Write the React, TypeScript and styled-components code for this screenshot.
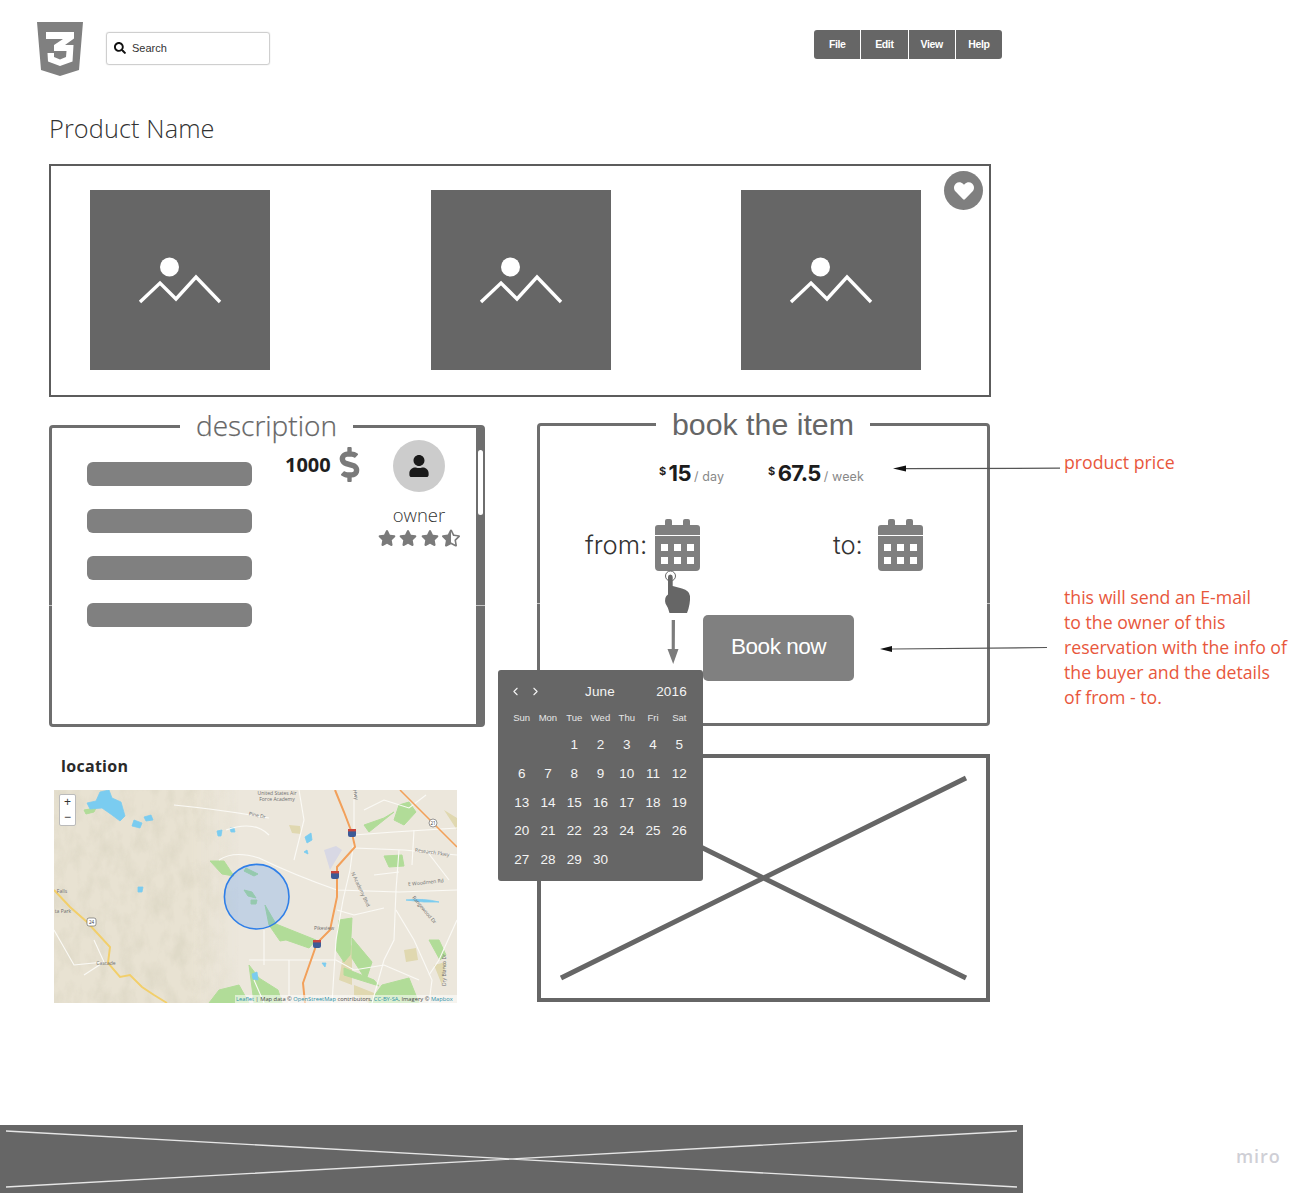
import React from "react";
import styled, { createGlobalStyle } from "styled-components";
import { FaDollarSign, FaHeart, FaSearch, FaStar, FaStarHalfAlt, FaUser } from "react-icons/fa";
import { ChevronLeft, ChevronRight } from "lucide-react";

const Global = createGlobalStyle`
  html, body { margin: 0; padding: 0; background: #fff; }
  body { font-family: "Open Sans", "Liberation Sans", sans-serif; }
  * { box-sizing: border-box; }
`;

const Board = styled.div`
  position: relative;
  width: 1309px;
  height: 1193px;
  overflow: hidden;
  background: #fff;
  display: flex;
  flex-direction: column;
`;

const Header = styled.header`
  display: flex;
  align-items: flex-start;
  height: 54px;
  margin: 22px 0 0 37px;
`;
const Logo = styled.svg`
  width: 46px;
  height: 54px;
  flex: none;
`;
const SearchBox = styled.div`
  display: flex;
  align-items: center;
  gap: 6px;
  width: 164px;
  height: 33px;
  margin: 10px 0 0 23px;
  padding: 0 0 1px 7px;
  border: 1px solid #cfcfcf;
  border-radius: 3px;
  box-shadow: 0 0 1px #bbb;
  font: 11px "Liberation Sans", sans-serif;
  color: #333;
`;
const Menu = styled.nav`
  display: flex;
  gap: 1px;
  margin: 8px 0 0 544px;
  border-radius: 3px;
  overflow: hidden;
`;
const MenuButton = styled.div`
  height: 29px;
  width: 46.25px;
  padding-bottom: 1px;
  background: #666;
  color: #fff;
  display: flex;
  align-items: center;
  justify-content: center;
  font: bold 10.5px "Liberation Sans", sans-serif;
  letter-spacing: -0.4px;
`;

const Title = styled.h1`
  margin: 35px 0 0 49px;
  font: 300 25.3px/34px "Open Sans", sans-serif;
  letter-spacing: 0.1px;
  color: #333;
`;

const Gallery = styled.section`
  position: relative;
  width: 942px;
  height: 233px;
  margin: 19px 0 0 49px;
  padding: 24px 0 0 39px;
  border: 2px solid #5c5c5c;
  display: grid;
  grid-template-columns: 341px 310px 180px;
`;
const ImageSlot = styled.div`
  width: 180px;
  height: 180px;
  background: #666;
`;
const ImageGlyph = styled.svg`
  display: block;
  width: 180px;
  height: 180px;
`;
const Favorite = styled.div`
  position: absolute;
  top: 5px;
  right: 6px;
  width: 39px;
  height: 39px;
  border-radius: 50%;
  background: #7f7f7f;
  color: #fff;
  display: flex;
  align-items: center;
  justify-content: center;
`;

const Columns = styled.div`
  display: grid;
  grid-template-columns: 436px 453px;
  column-gap: 52px;
  margin: 26px 0 0 49px;
`;
const LeftColumn = styled.div`
  padding-top: 2px;
`;
const RightColumn = styled.div``;

const Panel = styled.section`
  position: relative;
  border: 3px solid #6e6e6e;
  border-radius: 4px;
  &::before {
    content: "";
    position: absolute;
    left: -3px;
    right: -3px;
    top: 177px;
    height: 1px;
    background: linear-gradient(to right, #fff 3px, transparent 3px, transparent calc(100% - 3px), #fff 0);
    opacity: 0.6;
  }
`;
const DescriptionPanel = styled(Panel)`
  width: 436px;
  height: 302px;
  border-right-width: 9px;
  display: flex;
  align-items: flex-start;
  &::before { right: -9px; background: linear-gradient(to right, #fff 3px, transparent 3px, transparent calc(100% - 9px), #fff 0); }
`;
const Thumb = styled.div`
  position: absolute;
  top: 22px;
  right: -7px;
  width: 5px;
  height: 65px;
  background: #fff;
  border-radius: 3px;
`;
const PanelLabel = styled.h2`
  position: absolute;
  margin: 0;
  background: #fff;
  color: #666;
  white-space: nowrap;
`;
const DescriptionLabel = styled(PanelLabel)`
  top: -21px;
  left: 128px;
  padding: 0 16px;
  font: 300 28px/36px "Open Sans", sans-serif;
  -webkit-text-stroke: 0.25px #666;
`;
const BookLabel = styled(PanelLabel)`
  top: -19px;
  left: 116px;
  padding: 0 16px;
  font: 400 30.3px/36px "Liberation Sans", sans-serif;
`;
const BarList = styled.div`
  display: flex;
  flex-direction: column;
  gap: 23px;
  margin: 34px 0 0 35px;
`;
const Bar = styled.div`
  width: 165px;
  height: 24px;
  border-radius: 6px;
  background: #808080;
`;
const RentPrice = styled.div`
  display: flex;
  align-items: center;
  gap: 1px;
  width: 72px;
  height: 36px;
  margin: 18px 0 0 33px;
  font: 700 20px "Open Sans", sans-serif;
  color: #1f1f1f;
  svg { color: #7a7a7a; flex: none; }
`;
const Owner = styled.div`
  display: flex;
  flex-direction: column;
  align-items: center;
  width: 90px;
  margin: 12px 0 0 17px;
`;
const Avatar = styled.div`
  width: 52px;
  height: 52px;
  border-radius: 50%;
  background: #ccc;
  color: #1a1a1a;
  display: flex;
  align-items: center;
  justify-content: center;
`;
const OwnerName = styled.div`
  margin-top: 11px;
  font: 300 18.5px/24px "Open Sans", sans-serif;
  color: #333;
`;
const Stars = styled.div`
  display: flex;
  gap: 3.2px;
  margin-top: 2px;
  color: #7a7a7a;
`;

const LocationHeading = styled.h3`
  margin: 28px 0 0 12px;
  font: 700 16px/22px "Open Sans", sans-serif;
  letter-spacing: 0.3px;
  color: #2a2a2a;
`;
const MapFrame = styled.div`
  position: relative;
  width: 403px;
  height: 213px;
  margin: 13px 0 0 5px;
  overflow: hidden;
  background: #ece7dc;
`;
const MapArt = styled.svg`
  display: block;
  width: 403px;
  height: 213px;
`;
const ZoomControl = styled.div`
  position: absolute;
  top: 4px;
  left: 5px;
  width: 17px;
  height: 32px;
  background: #fff;
  border: 1px solid #bbb;
  border-radius: 2px;
  display: flex;
  flex-direction: column;
  align-items: center;
  font: 12px/15px "Liberation Sans", sans-serif;
  color: #333;
`;
const Attribution = styled.div`
  position: absolute;
  right: 0;
  bottom: 0;
  width: 222px;
  height: 8px;
  padding-left: 1px;
  background: rgba(255, 255, 255, 0.55);
  font: 5.75px/8px "Open Sans", sans-serif;
  white-space: nowrap;
  color: #444;
  span { color: #2a8fa8; }
`;

const BookPanel = styled(Panel)`
  width: 453px;
  height: 303px;
`;
const PriceRow = styled.div`
  display: flex;
  align-items: baseline;
  gap: 44px;
  height: 28px;
  margin: 33px 0 0 119px;
`;
const Rate = styled.div`
  display: flex;
  align-items: baseline;
  font: 700 22px/28px Inter, sans-serif;
  letter-spacing: -0.6px;
  color: #1c1c1c;
`;
const Currency = styled.span`
  font-size: 11px;
  position: relative;
  top: -6px;
  margin-right: 3px;
`;
const Period = styled.span`
  font: 400 12.5px Inter, sans-serif;
  letter-spacing: 0.1px;
  color: #888;
  margin-left: 3px;
`;
const DateRow = styled.div`
  display: grid;
  grid-template-columns: 248px auto;
  margin: 32px 0 0 45px;
`;
const DateField = styled.div`
  display: flex;
  align-items: center;
  height: 52px;
`;
const DateLabel = styled.span<{ $width: number }>`
  width: ${(p) => p.$width}px;
  font: 300 25.6px/30px Inter, sans-serif;
  color: #333;
`;
const BookButton = styled.div`
  width: 151px;
  height: 66px;
  margin: 44px 0 0 163px;
  padding-bottom: 2px;
  background: #808080;
  border-radius: 5px;
  color: #fff;
  display: flex;
  align-items: center;
  justify-content: center;
  font: 22.5px "Liberation Sans", sans-serif;
  letter-spacing: -0.5px;
`;
const Placeholder = styled.div`
  width: 453px;
  height: 248px;
  margin-top: 28px;
  border: 4px solid #666;
`;
const PlaceholderCross = styled.svg`
  display: block;
  width: 445px;
  height: 240px;
`;

const Footer = styled.footer`
  width: 1023px;
  height: 68px;
  margin-top: 122px;
  background: #666;
`;
const FooterCross = styled.svg`
  display: block;
  width: 1023px;
  height: 68px;
`;
const Miro = styled.div`
  position: absolute;
  left: 1236px;
  top: 1144px;
  font: 600 18px/24px "Open Sans", sans-serif;
  letter-spacing: 0.9px;
  color: #cfcfd6;
`;

const Note = styled.div`
  position: absolute;
  left: 1064px;
  font: 400 17.7px/25px "Open Sans", sans-serif;
  color: #e8573c;
  white-space: pre;
`;
const PriceNote = styled(Note)`
  top: 450px;
`;
const ReservationNote = styled(Note)`
  top: 585px;
`;
const Overlay = styled.svg`
  position: absolute;
  left: 0;
  top: 0;
  width: 1309px;
  height: 1193px;
  pointer-events: none;
`;

const CalendarPopup = styled.div`
  position: absolute;
  left: 498px;
  top: 670px;
  width: 205px;
  height: 211px;
  padding: 12px 10.5px 0;
  background: #666;
  border-radius: 3px;
  color: #f4f4f4;
  font-family: "Liberation Sans", sans-serif;
`;
const CalendarHeader = styled.div`
  display: grid;
  grid-template-columns: 53px 78px 1fr;
  align-items: center;
  height: 18px;
  font-size: 13.5px;
  letter-spacing: 0.2px;
`;
const CalendarNav = styled.div`
  display: flex;
  gap: 7px;
  margin-left: 0;
`;
const CalendarMonth = styled.div`
  text-align: center;
  margin-left: -1px;
`;
const CalendarYear = styled.div`
  text-align: right;
  padding-right: 5.5px;
`;
const WeekRow = styled.div`
  display: grid;
  grid-template-columns: repeat(7, 1fr);
  margin-top: 11px;
  height: 14px;
  font-size: 9.5px;
  line-height: 14px;
  text-align: center;
  color: #e6e6e6;
`;
const DayGrid = styled.div`
  display: grid;
  grid-template-columns: repeat(7, 1fr);
  grid-auto-rows: 28.7px;
  margin-top: 6.4px;
  font-size: 13.5px;
  line-height: 28.7px;
  text-align: center;
`;

const weekDays = ["Sun", "Mon", "Tue", "Wed", "Thu", "Fri", "Sat"];
const days: (number | null)[] = [null, null, ...Array.from({ length: 30 }, (_, i) => i + 1)];
const menu = ["File", "Edit", "View", "Help"];

const CalendarIcon = () => (
  <svg width="45" height="52" viewBox="0 0 45 52" fill="#7f7f7f" style={{ flex: "none" }}>
    <rect x="10" y="0" width="7" height="10" rx="2" />
    <rect x="28" y="0" width="7" height="10" rx="2" />
    <path d="M0 16V9a3 3 0 0 1 3-3h39a3 3 0 0 1 3 3v7z" />
    <path
      fillRule="evenodd"
      d="M0 17h45v31a4 4 0 0 1-4 4H4a4 4 0 0 1-4-4zM6 25v7h7v-7zM19 25v7h7v-7zM32 25v7h7v-7zM6 38v7h7v-7zM19 38v7h7v-7zM32 38v7h7v-7z"
    />
  </svg>
);

const MountainGlyph = () => (
  <ImageGlyph viewBox="0 0 180 180">
    <circle cx="79.5" cy="77" r="9.5" fill="#fff" />
    <polyline points="50,112 70,93 86,109 106,87 130,112" fill="none" stroke="#fff" strokeWidth="3.4" />
  </ImageGlyph>
);

const roads = [
  "M165 70 Q180 60 205 68 Q240 85 283 100 L345 102 L403 100",
  "M300 0 L300 50 L296 80 L289 110 L282 150 L278 213",
  "M300 45 L340 42 L403 38",
  "M300 58 L350 60 L403 65",
  "M345 60 L342 100 L340 150 L330 170 L318 213",
  "M342 120 L360 150 L378 190 L375 213",
  "M403 130 L385 170 L375 185",
  "M195 170 L282 170 L300 180 L330 175 L365 190",
  "M210 140 L210 175 M235 170 L235 213 M200 190 L210 213",
  "M283 120 L300 125 L330 118",
  "M172 40 Q200 30 215 45 M245 0 L250 30 L240 70",
  "M120 15 Q170 20 215 28",
  "M30 185 L50 172 L40 150 M0 140 L20 175 L50 172",
  "M310 20 L330 10 L355 18 L372 5",
  "M360 40 L358 75 M372 60 L395 90 M320 85 L345 82",
];
const greens = [
  "M156 71 L170 71 L180 86 L168 84 Z",
  "M211 115 L222 134 L262 150 L255 158 L232 150 L226 151 L215 135 Z",
  "M285 130 L298 128 L296 165 L290 172 L282 160 Z",
  "M298 148 L318 172 L312 190 L298 168 Z",
  "M165 200 L185 195 L195 213 L155 213 Z",
  "M195 175 L205 188 L224 200 L228 213 L200 213 Z",
  "M328 195 L355 188 L365 213 L315 213 Z",
  "M330 66 L348 65 L350 76 L335 77 Z",
  "M310 35 L330 28 L340 22 L315 42 Z",
  "M345 15 L355 12 L362 22 L350 35 L340 30 Z",
  "M385 150 L392 165 L386 170 L375 150 Z",
  "M290 178 L320 190 L325 196 L290 185 Z",
  "M192 78 L204 84 L200 86 L190 81 Z",
  "M190 100 L198 102 L202 108 L194 106 Z",
  "M197 110 L203 110 L202 114 L197 114 Z",
  "M30 20 L42 18 L40 22 L32 24 Z",
];
const tans = [
  "M235 35 L246 36 L247 44 L238 43 Z",
  "M290 160 L298 155 L298 195 L285 190 Z",
  "M300 195 L325 205 L315 213 L300 205 Z",
  "M390 20 L403 40 L403 28 Z",
  "M350 160 L362 158 L364 170 L352 172 Z",
  "M380 175 L392 172 L388 195 Z",
];
const waters = [
  "M33 13 L42 11 L46 2 L55 0 L58 8 L67 12 L71 26 L66 31 L58 25 L48 18 L36 19 Z",
  "M80 30 L88 33 L86 38 L78 36 Z",
  "M90 27 L97 25 L99 30 L92 31 Z",
  "M163 41 L168 40 L167 46 L164 46 Z",
  "M176 38 L180 38 L181 42 L177 42 Z",
  "M84 97 L89 97 L88 102 L84 102 Z",
  "M251 47 L257 43 L258 50 L253 53 Z",
  "M352 110 Q370 108 385 112 L370 112 Z",
  "M250 62 L253 60 L254 64 Z",
  "M268 173 L272 173 L271 177 Z",
  "M198 184 L203 182 L204 190 L199 189 Z",
];
const shields: [number, number][] = [
  [298, 43],
  [281, 85],
  [263, 154],
];

const MapDrawing = () => (
  <MapArt viewBox="0 0 403 213">
    <defs>
      <filter id="shade" x="0" y="0" width="100%" height="100%">
        <feTurbulence type="fractalNoise" baseFrequency="0.075 0.04" numOctaves="4" seed="8" />
        <feColorMatrix
          type="matrix"
          values="0 0 0 0 0.74  0 0 0 0 0.7  0 0 0 0 0.58  2.4 0 0 0 -0.95"
        />
      </filter>
      <filter id="soft">
        <feGaussianBlur stdDeviation="0.45" />
      </filter>
      <linearGradient id="fade" x1="0" x2="1" y1="0" y2="0">
        <stop offset="0" stopColor="#fff" />
        <stop offset="0.34" stopColor="#fff" />
        <stop offset="0.46" stopColor="#000" />
      </linearGradient>
      <mask id="west">
        <rect width="403" height="213" fill="url(#fade)" />
      </mask>
    </defs>
    <rect width="403" height="213" fill="#ece7dc" />
    <rect width="403" height="213" fill="#e8e2d2" mask="url(#west)" />
    <rect width="403" height="213" filter="url(#shade)" mask="url(#west)" />
    <g filter="url(#soft)">
      {tans.map((d) => (
        <path key={d} d={d} fill="#e0d8b0" />
      ))}
      {greens.map((d) => (
        <path key={d} d={d} fill="#b1dc98" stroke="#b1dc98" strokeLinejoin="round" />
      ))}
      <path d="M270 60 L282 56 L288 60 L276 80 Z" fill="#d6d6e4" opacity="0.9" />
      {waters.map((d) => (
        <path key={d} d={d} fill="#7accf0" stroke="#7accf0" strokeWidth="0.8" strokeLinejoin="round" />
      ))}
      <g fill="none" stroke="#fbfaf6" strokeWidth="1.1">
        {roads.map((d) => (
          <path key={d} d={d} />
        ))}
      </g>
      <path
        d="M281 0 L290 22 L298 43 L301 57 L283 77 L283 107 L276 140 L263 153 L249 193 L251 213"
        fill="none"
        stroke="#f2a05a"
        strokeWidth="2"
      />
      <path d="M346 0 L403 57" fill="none" stroke="#f2a05a" strokeWidth="1.6" />
      <path
        d="M0 100 L16 117 L33 132 L56 157 L54 173 L66 187 L76 185 L88 197 L100 205 L113 213"
        fill="none"
        stroke="#f2cf6b"
        strokeWidth="2"
      />
      {shields.map(([x, y]) => (
        <g key={x}>
          <rect x={x - 4} y={y - 4} width="8" height="8" rx="2" fill="#3d5a96" />
          <rect x={x - 4} y={y - 4} width="8" height="2.4" fill="#c8443c" />
        </g>
      ))}
      <circle cx="379" cy="33" r="4" fill="#fff" stroke="#555" strokeWidth="0.6" />
      <rect x="33" y="128" width="9" height="8" rx="2" fill="#fff" stroke="#555" strokeWidth="0.6" />
    </g>
    <g fontFamily="'Open Sans', sans-serif" fontSize="5" fill="#6e6e6e" textAnchor="middle">
      <text x="223" y="5">United States Air</text>
      <text x="223" y="11">Force Academy</text>
      <text x="203" y="27" transform="rotate(12 203 27)">Pine Dr</text>
      <text x="378" y="64" transform="rotate(8 378 64)">Research Pkwy</text>
      <text x="372" y="94" transform="rotate(-6 372 94)">E Woodmen Rd</text>
      <text x="305" y="100" transform="rotate(65 305 100)">N Academy Blvd</text>
      <text x="369" y="121" transform="rotate(50 369 121)">Rangewood Dr</text>
      <text x="270" y="140">Pikeview</text>
      <text x="52" y="175">Cascade</text>
      <text x="392" y="180" transform="rotate(-90 392 180)">Dry Blanco Dr</text>
      <text x="8" y="103">Falls</text>
      <text x="9" y="123">ta Park</text>
      <text x="300" y="5" transform="rotate(80 300 5)">Hwy</text>
      <text x="379" y="35" fontSize="4.5" fill="#333">21</text>
      <text x="37.5" y="134" fontSize="4.5" fill="#333">24</text>
    </g>
    <circle cx="202.7" cy="106.7" r="32.3" fill="#3388ff" fillOpacity="0.22" stroke="#2f7fe8" strokeWidth="1.6" />
  </MapArt>
);

export default function App() {
  return (
    <Board>
      <Global />
      <Header>
        <Logo viewBox="0 0 46 54">
          <path
            fill="#808080"
            fillRule="evenodd"
            d="M0 0H46L42 48L23 54L4 48ZM9 10V17H26L17 23V29H29.5L29 35L23 37.5L17 35V31H10.5L11 39.5L23 44L35.5 39.5L36.5 23H28L37 16.5V10Z"
          />
        </Logo>
        <SearchBox>
          <FaSearch size={12} color="#111" />
          Search
        </SearchBox>
        <Menu>
          {menu.map((m) => (
            <MenuButton key={m}>{m}</MenuButton>
          ))}
        </Menu>
      </Header>

      <Title>Product Name</Title>

      <Gallery>
        {[0, 1, 2].map((i) => (
          <ImageSlot key={i}>
            <MountainGlyph />
          </ImageSlot>
        ))}
        <Favorite>
          <FaHeart size={20} />
        </Favorite>
      </Gallery>

      <Columns>
        <LeftColumn>
          <DescriptionPanel>
            <DescriptionLabel>description</DescriptionLabel>
            <Thumb />
            <BarList>
              {[0, 1, 2, 3].map((i) => (
                <Bar key={i} />
              ))}
            </BarList>
            <RentPrice>
              1000
              <FaDollarSign size={35} />
            </RentPrice>
            <Owner>
              <Avatar>
                <FaUser size={22} />
              </Avatar>
              <OwnerName>owner</OwnerName>
              <Stars>
                <FaStar size={18} />
                <FaStar size={18} />
                <FaStar size={18} />
                <FaStarHalfAlt size={18} />
              </Stars>
            </Owner>
          </DescriptionPanel>
          <LocationHeading>location</LocationHeading>
          <MapFrame>
            <MapDrawing />
            <ZoomControl>
              <span>+</span>
              <span>−</span>
            </ZoomControl>
            <Attribution>
              <span>Leaflet</span> | Map data © <span>OpenStreetMap</span> contributors, <span>CC-BY-SA</span>, Imagery © <span>Mapbox</span>
            </Attribution>
          </MapFrame>
        </LeftColumn>

        <RightColumn>
          <BookPanel>
            <BookLabel>book the item</BookLabel>
            <PriceRow>
              <Rate>
                <Currency>$</Currency>15<Period>/ day</Period>
              </Rate>
              <Rate>
                <Currency>$</Currency>67.5<Period>/ week</Period>
              </Rate>
            </PriceRow>
            <DateRow>
              <DateField>
                <DateLabel $width={70}>from:</DateLabel>
                <CalendarIcon />
              </DateField>
              <DateField>
                <DateLabel $width={45}>to:</DateLabel>
                <CalendarIcon />
              </DateField>
            </DateRow>
            <BookButton>Book now</BookButton>
          </BookPanel>
          <Placeholder>
            <PlaceholderCross viewBox="0 0 445 240">
              <path d="M20 220L425 20M20 20L425 220" stroke="#666" strokeWidth="5" fill="none" />
            </PlaceholderCross>
          </Placeholder>
        </RightColumn>
      </Columns>

      <Footer>
        <FooterCross viewBox="0 0 1023 68">
          <path d="M6 6L1017 62M6 62L1017 6" stroke="#e6e6e6" strokeWidth="1.3" fill="none" />
        </FooterCross>
      </Footer>

      <CalendarPopup>
        <CalendarHeader>
          <CalendarNav>
            <ChevronLeft size={13} strokeWidth={2} />
            <ChevronRight size={13} strokeWidth={2} />
          </CalendarNav>
          <CalendarMonth>June</CalendarMonth>
          <CalendarYear>2016</CalendarYear>
        </CalendarHeader>
        <WeekRow>
          {weekDays.map((d) => (
            <span key={d}>{d}</span>
          ))}
        </WeekRow>
        <DayGrid>
          {days.map((d, i) => (
            <span key={i}>{d}</span>
          ))}
        </DayGrid>
      </CalendarPopup>

      <Overlay viewBox="0 0 1309 1193">
        <g>
          <path d="M671.7 620 L675 620 L674.8 649 L678.5 649 L673.2 664 L667.5 649 L671.7 649 Z" fill="#7c7c7c" />
          <path d="M1060 468.2 L905 468.6" stroke="#555" strokeWidth="1.2" fill="none" />
          <path d="M893 468.6 L906 465.6 L906 471.6 Z" fill="#111" />
          <path d="M1047 647.5 L892 649" stroke="#555" strokeWidth="1.2" fill="none" />
          <path d="M880 649 L892 646 L892 652 Z" fill="#111" />
          <circle cx="670.5" cy="576" r="5" fill="#fff" stroke="#666" strokeWidth="1" />
          <path
            fill="#666"
            d="M668 577Q668 574.5 670.3 574.5Q672.7 574.5 672.7 577V586L682 588.5Q689.5 590.5 690 596Q690.5 604 687 613H669.5Q668.5 608 665.5 603.5Q664 597 668 594.5Z"
          />
        </g>
      </Overlay>

      <PriceNote>product price</PriceNote>
      <ReservationNote>
        {"this will send an E-mail\nto the owner of this\nreservation with the info of\nthe buyer and the details\nof from - to."}
      </ReservationNote>
      <Miro>miro</Miro>
    </Board>
  );
}
